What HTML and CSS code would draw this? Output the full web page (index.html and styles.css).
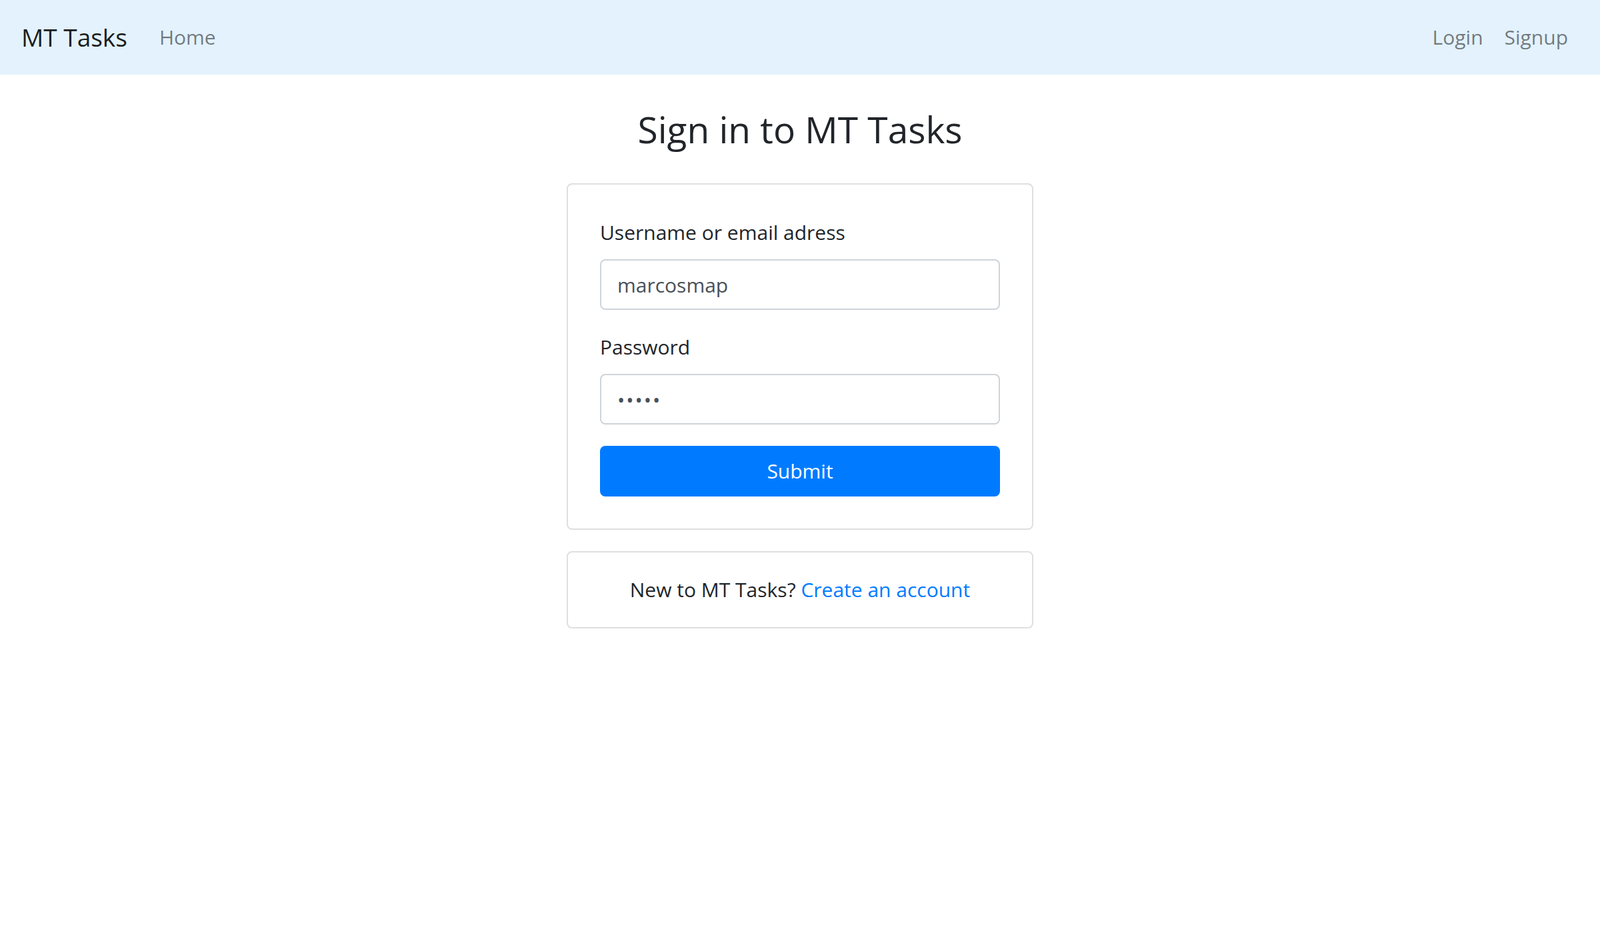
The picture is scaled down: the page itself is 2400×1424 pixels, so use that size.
FILE: index.html
```html
<!DOCTYPE html>
<html lang="en">
<head>
<meta charset="utf-8">
<title>MT Tasks - Sign in</title>
<link rel="stylesheet" href="styles.css">
</head>
<body>
<nav class="navbar">
  <div class="nav-left">
    <a class="brand" href="#">MT Tasks</a>
    <a class="nav-link" href="#">Home</a>
  </div>
  <div class="nav-right">
    <a class="nav-link" href="#">Login</a>
    <a class="nav-link" href="#">Signup</a>
  </div>
</nav>
<main class="container">
  <h3 class="title">Sign in to MT Tasks</h3>
  <div class="card">
    <form class="card-body">
      <div class="form-group">
        <label class="label" for="user">Username or email adress</label>
        <input class="input" id="user" type="text" value="marcosmap">
      </div>
      <div class="form-group">
        <label class="label" for="pass">Password</label>
        <input class="input input-pass" id="pass" type="password" value="12345">
      </div>
      <button class="btn" type="button">Submit</button>
    </form>
  </div>
  <div class="card card-small">
    <p class="signup-text">New to MT Tasks? <a class="link" href="#">Create an account</a></p>
  </div>
</main>
</body>
</html>
```
FILE: styles.css
```css
* { box-sizing: border-box; }
html, body { margin: 0; padding: 0; }
body {
  font-family: "Open Sans", "Noto Sans", sans-serif;
  font-size: 30px;
  line-height: 48px;
  color: #212529;
  background: #fff;
}
a { text-decoration: none; }
.navbar {
  height: 112px;
  background: #e3f2fd;
  padding: 16px 32px;
  display: flex;
  align-items: center;
  justify-content: space-between;
}
.nav-left, .nav-right { display: flex; align-items: center; }
.brand {
  font-size: 37px;
  line-height: 60px;
  color: rgba(0,0,0,.9);
  margin-right: 32px;
}
.nav-link {
  color: rgba(0,0,0,.5);
  padding: 16px;
  line-height: 48px;
}
.container {
  width: 700px;
  margin: 0 auto;
}
.title {
  font-size: 55px;
  font-weight: 500;
  line-height: 67px;
  text-align: center;
  margin: 48px 0;
}
.card {
  border: 2px solid #dfdfdf;
  border-radius: 8px;
  background: #fff;
}
.card-body {
  margin: 0;
  padding: 48px;
}
.form-group { margin-bottom: 32px; }
.label {
  display: block;
  margin-bottom: 16px;
  line-height: 48px;
}
.input {
  display: block;
  width: 100%;
  height: 76px;
  padding: 12px 24px;
  font-family: inherit;
  font-size: 30px;
  line-height: 48px;
  color: #495057;
  border: 2px solid #ced4da;
  border-radius: 8px;
  background: #fff;
  outline: none;
}
.input-pass { letter-spacing: 2px; }
.btn {
  display: block;
  width: 100%;
  height: 76px;
  font-family: inherit;
  font-size: 30px;
  line-height: 48px;
  color: #fff;
  background: #007bff;
  border: 2px solid #007bff;
  border-radius: 8px;
  padding: 12px 24px;
}
.card-small { margin-top: 32px; }
.signup-text {
  margin: 0;
  padding: 32px;
  text-align: center;
  line-height: 48px;
}
.link { color: #007bff; }
```
